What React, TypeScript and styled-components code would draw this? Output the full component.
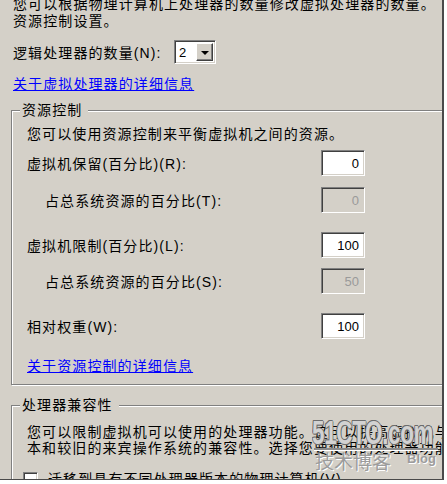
import React from 'react';
import styled, { createGlobalStyle } from 'styled-components';

const Global = createGlobalStyle`
  * { box-sizing: border-box; }
  html, body { margin: 0; padding: 0; background: #ffffff; }
  body { width: 447px; height: 484px; overflow: hidden; }
`;

const Window = styled.div`
  position: relative;
  width: 444px;
  height: 480px;
  background: #d4d0c8;
  border-right: 2px solid #4a4a4a;
  border-bottom: 1px solid #4a4a4a;
  overflow: hidden;
  padding-left: 13px;
  font-family: "Liberation Sans", "Noto Sans CJK SC", sans-serif;
  font-size: 14px;
  letter-spacing: 1.1px;
  color: #000;
`;

const Para = styled.p<{ $lh?: number }>`
  margin: 0;
  line-height: ${(p) => p.$lh ?? 17}px;
  white-space: nowrap;
`;

const Intro = styled(Para)`
  margin-top: -4px;
`;

const TopRow = styled.div`
  display: flex;
  align-items: center;
  height: 24px;
  margin-top: 10px;
`;

const TopLabel = styled.span`
  width: 161px;
  white-space: nowrap;
`;

const Combo = styled.div`
  display: flex;
  align-items: center;
  width: 42px;
  height: 24px;
  background: #fff;
  border: 1px solid;
  border-color: #808080 #ffffff #ffffff #808080;
  box-shadow: inset 1px 1px 0 #404040, inset -1px -1px 0 #d4d0c8;
  padding: 2px 2px 2px 4px;
`;

const ComboValue = styled.span`
  font-family: "Liberation Sans", sans-serif;
  font-size: 13px;
  letter-spacing: 0;
  flex: 1;
`;

const DropButton = styled.div`
  width: 17px;
  height: 18px;
  background: #d4d0c8;
  border: 1px solid;
  border-color: #ffffff #404040 #404040 #ffffff;
  box-shadow: inset -1px -1px 0 #808080;
  display: flex;
  align-items: center;
  justify-content: center;
`;

const Arrow = styled.span`
  width: 0;
  height: 0;
  border-left: 4px solid transparent;
  border-right: 4px solid transparent;
  border-top: 4px solid #000;
  margin-top: 1px;
`;

const Link = styled.a<{ $mt: number }>`
  display: block;
  width: max-content;
  margin-top: ${(p) => p.$mt}px;
  line-height: 17px;
  color: #0000ff;
  text-decoration: underline;
  cursor: pointer;
`;

const Group = styled.fieldset<{ $mt: number }>`
  margin: ${(p) => p.$mt}px -30px 0 -2px;
  padding: 0;
  min-width: 0;
  border: 1px solid #808080;
  box-shadow: inset 1px 1px 0 #ffffff, 1px 1px 0 #ffffff;
`;

const Legend = styled.legend`
  margin-left: 8px;
  padding: 0 6px 0 2px;
  line-height: 17px;
  background: #d4d0c8;
`;

const GroupBody = styled.div<{ $pt: number; $pb: number }>`
  padding: ${(p) => p.$pt}px 0 ${(p) => p.$pb}px 15px;
`;

const FieldRow = styled.div<{ $mt: number }>`
  display: flex;
  align-items: center;
  width: 338px;
  margin-top: ${(p) => p.$mt}px;
`;

const FieldLabel = styled.span<{ $indent?: boolean }>`
  padding-left: ${(p) => (p.$indent ? 18 : 0)}px;
  white-space: nowrap;
`;

const NumBox = styled.div<{ $disabled?: boolean }>`
  margin-left: auto;
  width: 44px;
  height: 26px;
  display: flex;
  align-items: center;
  justify-content: flex-end;
  padding-right: 5px;
  background: ${(p) => (p.$disabled ? '#d4d0c8' : '#ffffff')};
  color: ${(p) => (p.$disabled ? '#9a9a9a' : '#000000')};
  border: 1px solid;
  border-color: #808080 #ffffff #ffffff #808080;
  box-shadow: inset 1px 1px 0 #404040, inset -1px -1px 0 #d4d0c8;
  font-family: "Liberation Sans", sans-serif;
  font-size: 13px;
  letter-spacing: 0;
`;

const CheckRow = styled.div`
  display: flex;
  align-items: flex-start;
  gap: 10px;
  margin-top: 16px;
  margin-left: -4px;
  white-space: nowrap;
`;

const CheckBox = styled.span`
  flex: none;
  width: 15px;
  height: 15px;
  background: #fff;
  border: 1px solid;
  border-color: #808080 #ffffff #ffffff #808080;
  box-shadow: inset 1px 1px 0 #404040, inset -1px -1px 0 #d4d0c8;
`;

const CheckText = styled.span`
  line-height: 15px;
`;

/* Watermark overlay */
const Watermark = styled.div`
  position: absolute;
  left: 312px;
  top: 418px;
  width: 128px;
  pointer-events: none;
`;

const WmLogo = styled.div`
  font-family: "Liberation Sans", sans-serif;
  font-weight: bold;
  font-size: 33px;
  line-height: 30px;
  letter-spacing: -0.5px;
  color: #d2d2d2;
  transform: scale(0.68, 1.02);
  transform-origin: left center;
  white-space: nowrap;
  text-shadow: 1px 0 0 #6c6c6c, -1px 0 0 #6c6c6c, 0 1px 0 #6c6c6c, 0 -1px 0 #6c6c6c,
    1px 1px 0 #6c6c6c, -1px -1px 0 #6c6c6c;
`;

const WmRule = styled.div`
  height: 2px;
  margin: 0 0 0 2px;
  width: 124px;
  background: #8a8a8a;
  box-shadow: 0 1px 0 #ffffff;
`;

const WmBottom = styled.div`
  display: flex;
  align-items: flex-end;
  justify-content: space-between;
  padding-right: 4px;
`;

const WmCn = styled.span`
  font-family: "Noto Sans CJK SC", sans-serif;
  font-size: 19px;
  line-height: 22px;
  letter-spacing: 0;
  padding-left: 3px;
  color: #9c9c9c;
  text-shadow: 1px 1px 0 #ffffff;
`;

const WmBlog = styled.span`
  font-family: "Liberation Sans", sans-serif;
  font-weight: bold;
  font-size: 13px;
  line-height: 16px;
  letter-spacing: 0;
  margin-bottom: 5px;
  color: #9c9c9c;
  text-shadow: 1px 1px 0 #ffffff;
`;

export default function App() {
  return (
    <>
      <Global />
      <Window>
        <Intro>
          您可以根据物理计算机上处理器的数量修改虚拟处理器的数量。
          <br />
          资源控制设置。
        </Intro>
        <TopRow>
          <TopLabel>逻辑处理器的数量(N):</TopLabel>
          <Combo>
            <ComboValue>2</ComboValue>
            <DropButton>
              <Arrow />
            </DropButton>
          </Combo>
        </TopRow>
        <Link $mt={12}>关于虚拟处理器的详细信息</Link>

        <Group $mt={9}>
          <Legend>资源控制</Legend>
          <GroupBody $pt={7} $pb={9}>
            <Para>您可以使用资源控制来平衡虚拟机之间的资源。</Para>
            <FieldRow $mt={7}>
              <FieldLabel>虚拟机保留(百分比)(R):</FieldLabel>
              <NumBox>0</NumBox>
            </FieldRow>
            <FieldRow $mt={11}>
              <FieldLabel $indent>占总系统资源的百分比(T):</FieldLabel>
              <NumBox $disabled>0</NumBox>
            </FieldRow>
            <FieldRow $mt={19}>
              <FieldLabel>虚拟机限制(百分比)(L):</FieldLabel>
              <NumBox>100</NumBox>
            </FieldRow>
            <FieldRow $mt={10}>
              <FieldLabel $indent>占总系统资源的百分比(S):</FieldLabel>
              <NumBox $disabled>50</NumBox>
            </FieldRow>
            <FieldRow $mt={19}>
              <FieldLabel>相对权重(W):</FieldLabel>
              <NumBox>100</NumBox>
            </FieldRow>
            <Link $mt={19}>关于资源控制的详细信息</Link>
          </GroupBody>
        </Group>

        <Group $mt={12}>
          <Legend>处理器兼容性</Legend>
          <GroupBody $pt={10} $pb={10}>
            <Para $lh={16}>
              您可以限制虚拟机可以使用的处理器功能。这可以提高虚拟机与早期版
              <br />
              本和较旧的来宾操作系统的兼容性。选择您要使用的处理器功能。
            </Para>
            <CheckRow>
              <CheckBox />
              <CheckText>迁移到具有不同处理器版本的物理计算机(V)</CheckText>
            </CheckRow>
          </GroupBody>
        </Group>

        <Watermark>
          <WmLogo>51CTO.com</WmLogo>
          <WmRule />
          <WmBottom>
            <WmCn>技术博客</WmCn>
            <WmBlog>Blog</WmBlog>
          </WmBottom>
        </Watermark>
      </Window>
    </>
  );
}
